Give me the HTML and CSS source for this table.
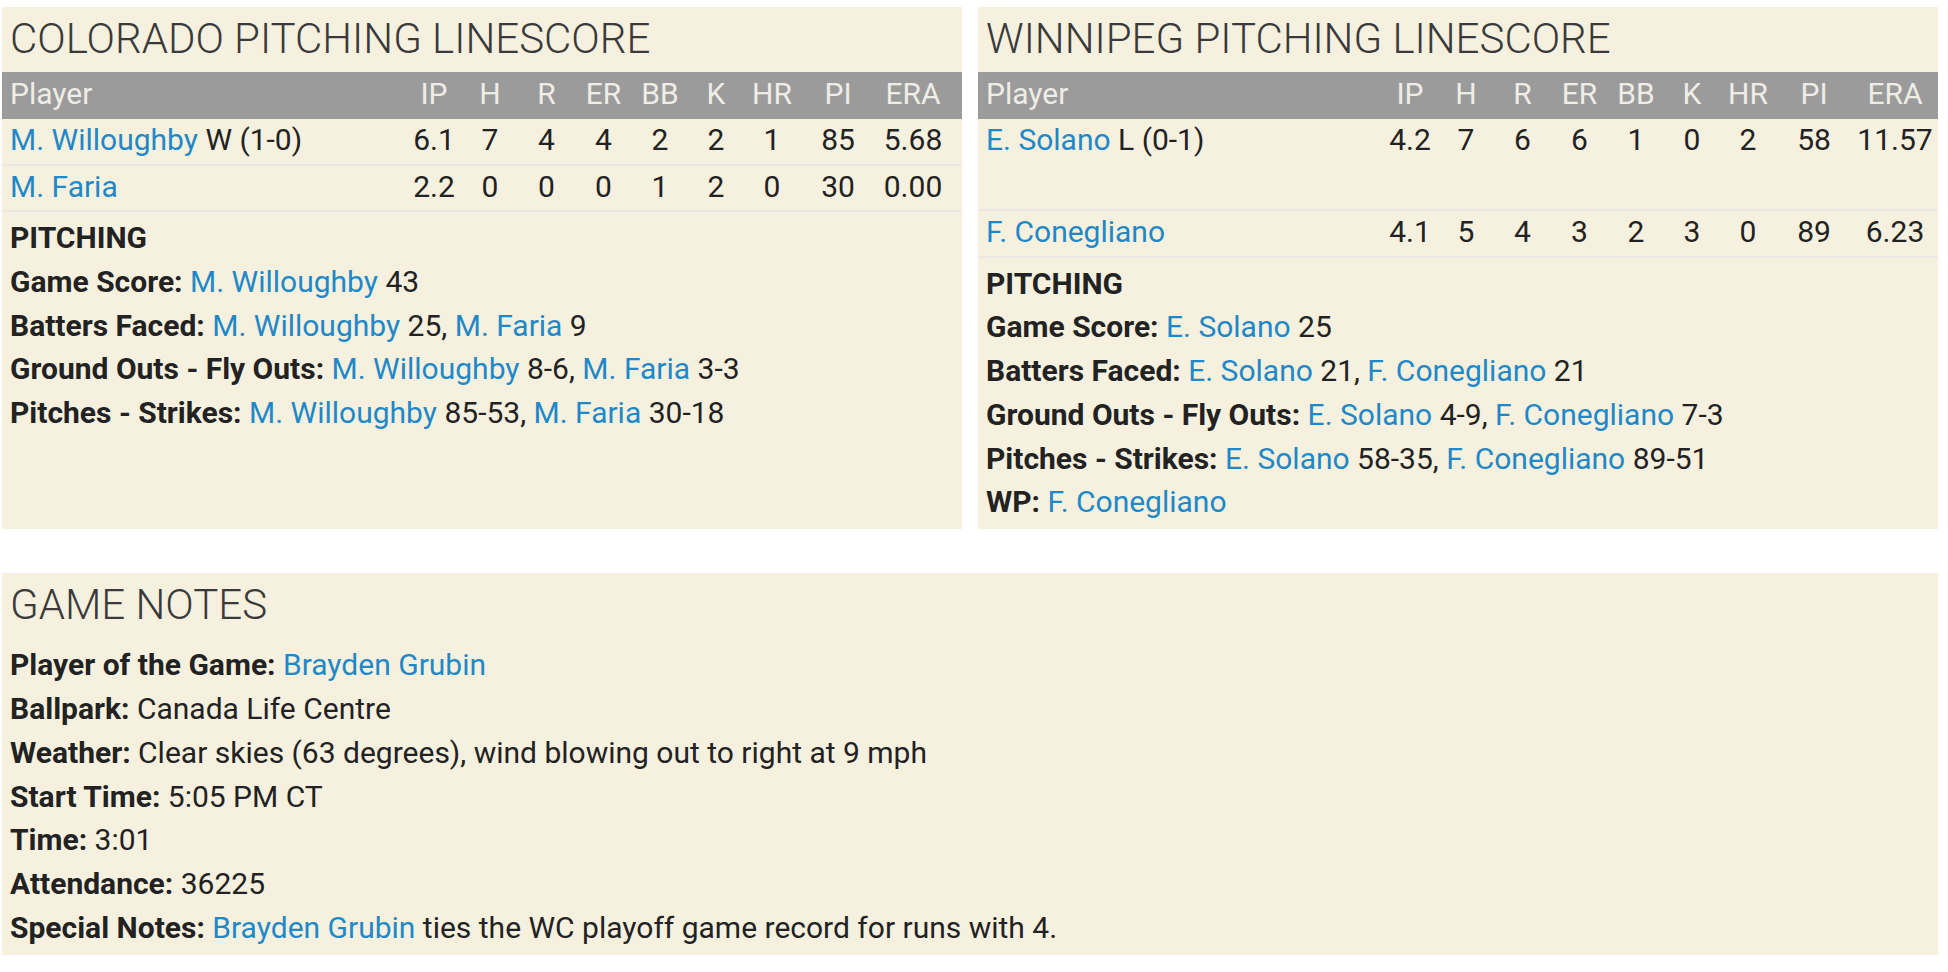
FILE: index.html
```html
<!DOCTYPE html>
<html lang="en">
<head>
    <meta charset="UTF-8">
    <meta name="viewport" content="width=device-width, initial-scale=1.0">
    <title>Box Score - Pitching</title>
    <link rel="stylesheet" href="styles.css">
</head>
<body>
    <div class="page">
        <div class="panel-row">
            <!-- Colorado pitching -->
            <section class="panel">
                <h2 class="panel-title">COLORADO PITCHING LINESCORE</h2>
                <table class="linescore">
                    <colgroup>
                        <col>
                        <col class="c-stat"><col class="c-stat"><col class="c-stat-w"><col class="c-stat-w">
                        <col class="c-stat"><col class="c-stat"><col class="c-stat">
                        <col class="c-pi"><col class="c-era">
                    </colgroup>
                    <thead>
                        <tr>
                            <th class="player">Player</th>
                            <th>IP</th><th>H</th><th>R</th><th>ER</th><th>BB</th><th>K</th><th>HR</th><th>PI</th><th class="era">ERA</th>
                        </tr>
                    </thead>
                    <tbody>
                        <tr>
                            <td class="player"><a href="#">M. Willoughby</a> W (1-0)</td>
                            <td>6.1</td><td>7</td><td>4</td><td>4</td><td>2</td><td>2</td><td>1</td><td>85</td><td class="era">5.68</td>
                        </tr>
                        <tr>
                            <td class="player"><a href="#">M. Faria</a></td>
                            <td>2.2</td><td>0</td><td>0</td><td>0</td><td>1</td><td>2</td><td>0</td><td>30</td><td class="era">0.00</td>
                        </tr>
                    </tbody>
                </table>
                <div class="notes">
                    <div class="notes-head">PITCHING</div>
                    <div><b>Game Score:</b> <a href="#">M. Willoughby</a> 43</div>
                    <div><b>Batters Faced:</b> <a href="#">M. Willoughby</a> 25, <a href="#">M. Faria</a> 9</div>
                    <div><b>Ground Outs - Fly Outs:</b> <a href="#">M. Willoughby</a> 8-6, <a href="#">M. Faria</a> 3-3</div>
                    <div><b>Pitches - Strikes:</b> <a href="#">M. Willoughby</a> 85-53, <a href="#">M. Faria</a> 30-18</div>
                </div>
            </section>

            <!-- Winnipeg pitching -->
            <section class="panel">
                <h2 class="panel-title">WINNIPEG PITCHING LINESCORE</h2>
                <table class="linescore linescore-wide">
                    <colgroup>
                        <col>
                        <col class="c-stat"><col class="c-stat"><col class="c-stat-w"><col class="c-stat-w">
                        <col class="c-stat"><col class="c-stat"><col class="c-stat">
                        <col class="c-pi"><col class="c-era">
                    </colgroup>
                    <thead>
                        <tr>
                            <th class="player">Player</th>
                            <th>IP</th><th>H</th><th>R</th><th>ER</th><th>BB</th><th>K</th><th>HR</th><th>PI</th><th class="era">ERA</th>
                        </tr>
                    </thead>
                    <tbody>
                        <tr class="row-tall">
                            <td class="player"><a href="#">E. Solano</a> L (0-1)</td>
                            <td>4.2</td><td>7</td><td>6</td><td>6</td><td>1</td><td>0</td><td>2</td><td>58</td><td class="era">11.57</td>
                        </tr>
                        <tr>
                            <td class="player"><a href="#">F. Conegliano</a></td>
                            <td>4.1</td><td>5</td><td>4</td><td>3</td><td>2</td><td>3</td><td>0</td><td>89</td><td class="era">6.23</td>
                        </tr>
                    </tbody>
                </table>
                <div class="notes">
                    <div class="notes-head">PITCHING</div>
                    <div><b>Game Score:</b> <a href="#">E. Solano</a> 25</div>
                    <div><b>Batters Faced:</b> <a href="#">E. Solano</a> 21, <a href="#">F. Conegliano</a> 21</div>
                    <div><b>Ground Outs - Fly Outs:</b> <a href="#">E. Solano</a> 4-9, <a href="#">F. Conegliano</a> 7-3</div>
                    <div><b>Pitches - Strikes:</b> <a href="#">E. Solano</a> 58-35, <a href="#">F. Conegliano</a> 89-51</div>
                    <div><b>WP:</b> <a href="#">F. Conegliano</a></div>
                </div>
            </section>
        </div>

        <!-- Game notes -->
        <section class="panel game-notes">
            <h2 class="panel-title">GAME NOTES</h2>
            <div class="notes">
                <div><b>Player of the Game:</b> <a href="#">Brayden Grubin</a></div>
                <div><b>Ballpark:</b> Canada Life Centre</div>
                <div><b>Weather:</b> Clear skies (63 degrees), wind blowing out to right at 9 mph</div>
                <div><b>Start Time:</b> 5:05 PM CT</div>
                <div><b>Time:</b> 3:01</div>
                <div><b>Attendance:</b> 36225</div>
                <div><b>Special Notes:</b> <a href="#">Brayden Grubin</a> ties the WC playoff game record for runs with 4.</div>
            </div>
        </section>
    </div>
</body>
</html>
```

FILE: styles.css
```css
* {
    box-sizing: border-box;
}
body {
    margin: 0;
    background: #fff;
    font-family: Roboto, "Noto Sans", sans-serif;
    font-size: 30px;
    color: #222;
}
a {
    color: #1f88c8;
    text-decoration: none;
}
.page {
    padding: 7px 10px 14px 2px;
}
.panel-row {
    display: flex;
    gap: 16px;
}
.panel {
    flex: 1;
    background: #f6f1de;
    padding: 7px 0 5px;
}
.panel-title {
    margin: 0 0 8px;
    padding: 0 8px;
    font-size: 42px;
    font-weight: 300;
    line-height: 50px;
    color: #3a3a3a;
}

/* Linescore table */
.linescore {
    width: 100%;
    table-layout: fixed;
    border-collapse: separate;
    border-spacing: 0;
}
.linescore .c-stat { width: 56px; }
.linescore .c-stat-w { width: 57px; }
.linescore .c-pi { width: 76px; }
.linescore .c-era { width: 86px; }
.linescore th, .linescore td {
    padding: 0;
    text-align: center;
    white-space: nowrap;
    vertical-align: top;
}
.linescore th {
    background: #9b9b9b;
    color: #eeede6;
    font-weight: 400;
    line-height: 44px;
    padding-bottom: 3px;
}
.linescore td {
    line-height: 42px;
    padding-bottom: 2.5px;
    border-bottom: 2px solid #eae8e1;
}
.linescore .player {
    text-align: left;
    padding-left: 8px;
}
.linescore .era {
    padding-right: 12px;
}
.linescore-wide .era {
    padding-right: 0;
}
.linescore .row-tall td {
    padding-bottom: 48px;
}

/* Notes lines */
.notes {
    margin-top: 4px;
    padding: 0 8px;
    line-height: 43.8px;
}
.notes b, .notes-head {
    font-weight: 700;
}
.game-notes {
    margin-top: 44px;
}
.game-notes .notes {
    margin-top: 13px;
}
```
